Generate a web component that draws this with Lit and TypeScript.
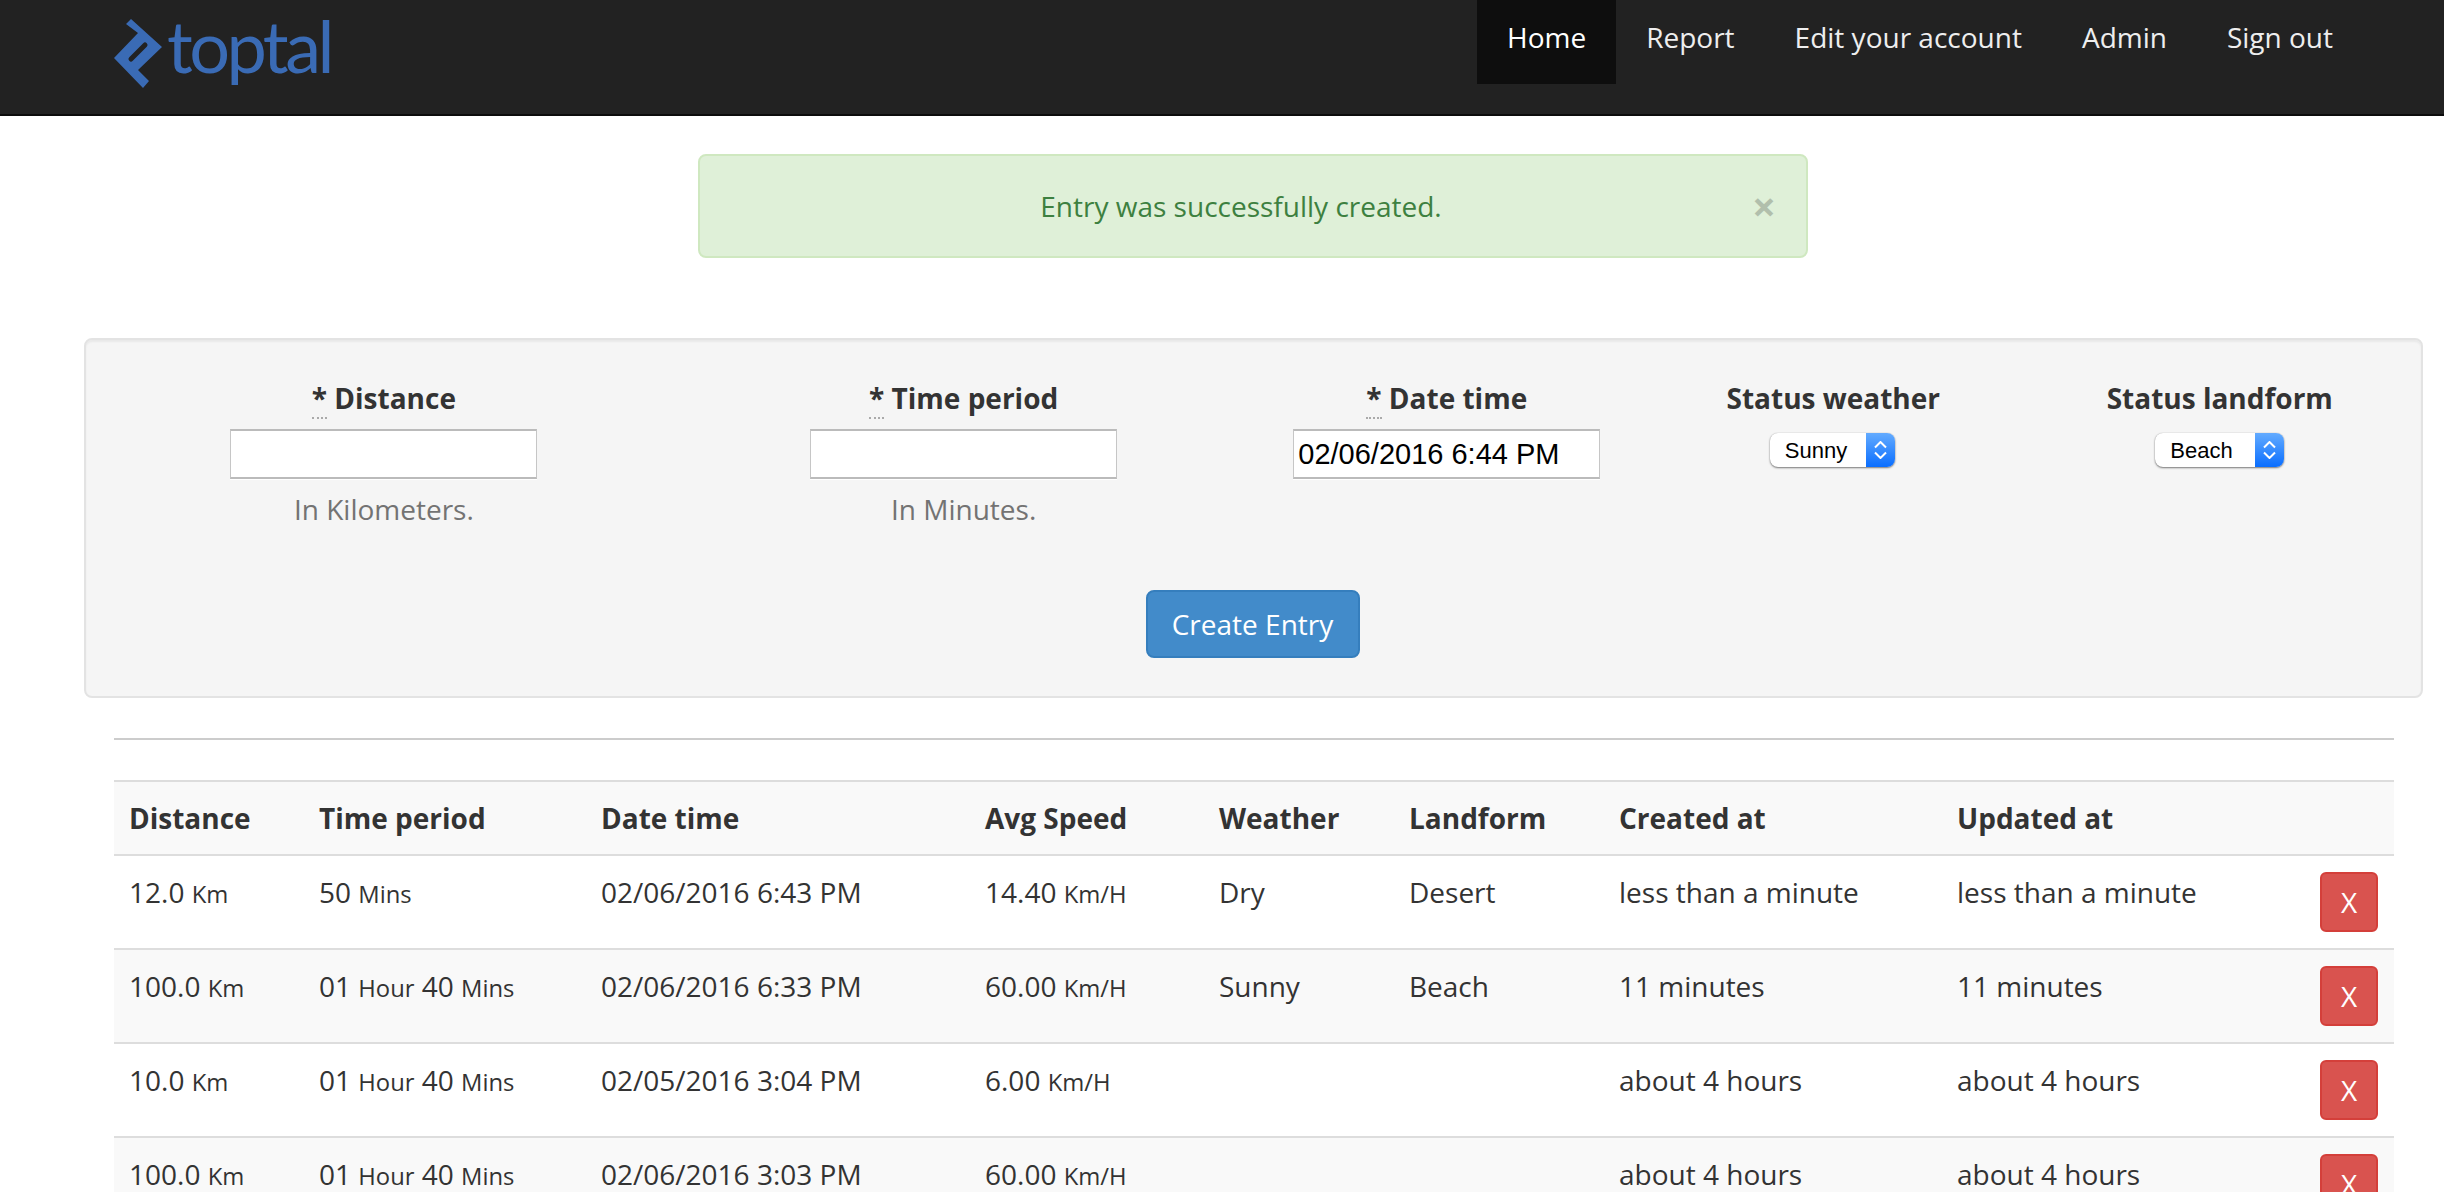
import { LitElement, html, css } from 'lit';
import { customElement } from 'lit/decorators.js';

interface Entry {
  distance: string;
  period: Array<[string, string]>;
  date: string;
  speed: string;
  weather: string;
  landform: string;
  created: string;
  updated: string;
}

const HOUR_40: Array<[string, string]> = [['01', 'Hour'], ['40', 'Mins']];

const ENTRIES: Entry[] = [
  { distance: '12.0', period: [['50', 'Mins']], date: '02/06/2016 6:43 PM', speed: '14.40', weather: 'Dry', landform: 'Desert', created: 'less than a minute', updated: 'less than a minute' },
  { distance: '100.0', period: HOUR_40, date: '02/06/2016 6:33 PM', speed: '60.00', weather: 'Sunny', landform: 'Beach', created: '11 minutes', updated: '11 minutes' },
  { distance: '10.0', period: HOUR_40, date: '02/05/2016 3:04 PM', speed: '6.00', weather: '', landform: '', created: 'about 4 hours', updated: 'about 4 hours' },
  { distance: '100.0', period: HOUR_40, date: '02/06/2016 3:03 PM', speed: '60.00', weather: '', landform: '', created: 'about 4 hours', updated: 'about 4 hours' },
];

const HEADINGS = ['Distance', 'Time period', 'Date time', 'Avg Speed', 'Weather', 'Landform', 'Created at', 'Updated at', ''];

@customElement('app-root')
export class AppRoot extends LitElement {
  static styles = css`
    :host {
      display: block;
      height: 100vh;
      overflow: hidden;
      background: #fff;
      color: #333;
      font-family: 'Open Sans', sans-serif;
      font-size: 28px;
      line-height: 40px;
    }
    * {
      box-sizing: border-box;
    }
    .navbar {
      display: flex;
      justify-content: space-between;
      height: 116px;
      padding: 0 81px 0 114px;
      background: #222;
      border-bottom: 2px solid #0c0c0c;
    }
    .logo {
      display: flex;
      align-items: flex-start;
    }
    .logo svg {
      display: block;
      margin-top: 18px;
      width: 50px;
      height: 71px;
    }
    .logo-word {
      margin: 3px 0 0 3px;
      color: #3a6bb5;
      font-family: Lato, sans-serif;
      font-weight: 400;
      font-size: 72px;
      line-height: 84px;
      letter-spacing: -3.5px;
    }
    .nav {
      display: flex;
      align-items: flex-start;
    }
    .nav a {
      display: block;
      height: 84px;
      padding: 17px 30px 0;
      color: #eee;
      text-decoration: none;
    }
    .nav a.active {
      background: #0e0e0e;
      color: #fff;
    }
    .alert {
      position: relative;
      width: 1110px;
      margin: 38px 0 80px 698px;
      padding: 30px 54px 30px 30px;
      background: #dff0d8;
      border: 2px solid #cfe8c0;
      border-radius: 8px;
      color: #3d8040;
      text-align: center;
    }
    .close {
      position: absolute;
      top: 30px;
      right: 30px;
      color: #000;
      opacity: 0.2;
      font-size: 42px;
      font-weight: 700;
      line-height: 40px;
    }
    .well {
      margin: 0 21px 40px 84px;
      padding: 38px 8px;
      background: #f5f5f5;
      border: 2px solid #e3e3e3;
      border-radius: 8px;
      box-shadow: inset 0 2px 2px rgba(0, 0, 0, 0.05);
    }
    .fields {
      display: grid;
      grid-template-columns: 3fr 3fr 2fr 2fr 2fr;
    }
    .field {
      display: flex;
      flex-direction: column;
      align-items: center;
    }
    label {
      font-weight: 700;
      margin-bottom: 11px;
    }
    abbr {
      text-decoration: none;
      border-bottom: 2px dotted #aaa;
    }
    input {
      display: block;
      width: 307px;
      height: 50px;
      padding: 0 4px;
      background: #fff;
      border-style: solid;
      border-width: 2px 1px;
      border-color: #bbb #c6c6c6;
      border-radius: 0;
      box-shadow: 0 1px 0 #fff;
      color: #000;
      font-family: 'Liberation Sans', sans-serif;
      font-size: 29px;
      outline: none;
    }
    .help {
      margin-top: 10px;
      color: #737373;
    }
    .select {
      display: flex;
      width: 125px;
      height: 34px;
      margin: 4px 2px 0 0;
      background: #fff;
      border-radius: 8px;
      overflow: hidden;
      box-shadow: 0 1px 2px rgba(0, 0, 0, 0.5), 0 0 1px rgba(0, 0, 0, 0.25);
    }
    .select.wide {
      width: 129px;
      margin-right: 0;
    }
    .select select {
      flex: 1;
      min-width: 0;
      padding: 0 0 0 15px;
      appearance: none;
      background: none;
      border: none;
      color: #000;
      font-family: 'Liberation Sans', sans-serif;
      font-size: 22px;
      outline: none;
    }
    .arrows {
      display: flex;
      align-items: center;
      justify-content: center;
      width: 29px;
      background: linear-gradient(#63abff, #0a6eff);
    }
    .actions {
      display: flex;
      justify-content: center;
      margin-top: 61px;
      padding-right: 2px;
    }
    .btn {
      width: 214px;
      padding: 12px 0;
      background: #428bca;
      border: 2px solid #357ebd;
      border-radius: 8px;
      color: #fff;
      font: inherit;
    }
    hr {
      height: 2px;
      margin: 0 50px 40px 114px;
      background: #ccc;
      border: none;
    }
    table {
      width: 2280px;
      margin-left: 114px;
      border-collapse: separate;
      border-spacing: 0;
      table-layout: fixed;
    }
    th,
    td {
      padding: 16px;
      text-align: left;
      vertical-align: top;
      border-bottom: 2px solid #ddd;
    }
    th:first-child,
    td:first-child {
      padding-left: 15px;
    }
    th {
      background: #f9f9f9;
      border-top: 2px solid #ddd;
      font-weight: 700;
    }
    tbody tr:nth-child(even) td {
      background: #f9f9f9;
    }
    small {
      font-size: 85%;
    }
    .delete {
      text-align: right;
    }
    .delete button {
      width: 58px;
      height: 60px;
      padding: 0;
      background: #d9534f;
      border: 2px solid #d43f3a;
      border-radius: 6px;
      color: #fff;
      font: inherit;
    }
  `;

  renderField(label: string, help: string, value = '') {
    return html`
      <div class="field">
        <label><abbr title="required">*</abbr> ${label}</label>
        <input type="text" .value=${value} />
        ${help ? html`<div class="help">${help}</div>` : ''}
      </div>
    `;
  }

  renderSelect(label: string, value: string, wide: boolean) {
    return html`
      <div class="field">
        <label>${label}</label>
        <div class="select ${wide ? 'wide' : ''}">
          <select><option>${value}</option></select>
          <div class="arrows">
            <svg width="13" height="18" viewBox="0 0 13 18" fill="none" stroke="#fff" stroke-width="2">
              <path d="M1 6.5 6.5 1 12 6.5" />
              <path d="M1 11.5 6.5 17 12 11.5" />
            </svg>
          </div>
        </div>
      </div>
    `;
  }

  renderRow(entry: Entry) {
    return html`
      <tr>
        <td>${entry.distance} <small>Km</small></td>
        <td>${entry.period.map(([n, unit]) => html`${n} <small>${unit}</small> `)}</td>
        <td>${entry.date}</td>
        <td>${entry.speed} <small>Km/H</small></td>
        <td>${entry.weather}</td>
        <td>${entry.landform}</td>
        <td>${entry.created}</td>
        <td>${entry.updated}</td>
        <td class="delete"><button>X</button></td>
      </tr>
    `;
  }

  render() {
    return html`
      <header class="navbar">
        <div class="logo">
          <svg viewBox="0 0 50 71" aria-hidden="true">
            <path d="M17 1 48 29 24 52 35 63 29 70 0 40 24 15 12 6Z" fill="#3a6bb5" />
            <path d="M17 41 31 27" stroke="#222" stroke-width="5" stroke-linecap="round" />
          </svg>
          <span class="logo-word">toptal</span>
        </div>
        <nav class="nav">
          <a class="active" href="#">Home</a>
          <a href="#">Report</a>
          <a href="#">Edit your account</a>
          <a href="#">Admin</a>
          <a href="#">Sign out</a>
        </nav>
      </header>

      <div class="alert">
        Entry was successfully created.
        <span class="close">×</span>
      </div>

      <form class="well">
        <div class="fields">
          ${this.renderField('Distance', 'In Kilometers.')}
          ${this.renderField('Time period', 'In Minutes.')}
          ${this.renderField('Date time', '', '02/06/2016 6:44 PM')}
          ${this.renderSelect('Status weather', 'Sunny', false)}
          ${this.renderSelect('Status landform', 'Beach', true)}
        </div>
        <div class="actions"><button class="btn" type="button">Create Entry</button></div>
      </form>

      <hr />

      <table>
        <colgroup>
          <col style="width:189px" /><col style="width:282px" /><col style="width:384px" />
          <col style="width:234px" /><col style="width:190px" /><col style="width:210px" />
          <col style="width:338px" /><col style="width:363px" /><col style="width:90px" />
        </colgroup>
        <thead>
          <tr>${HEADINGS.map((h) => html`<th>${h}</th>`)}</tr>
        </thead>
        <tbody>${ENTRIES.map((e) => this.renderRow(e))}</tbody>
      </table>
    `;
  }
}
